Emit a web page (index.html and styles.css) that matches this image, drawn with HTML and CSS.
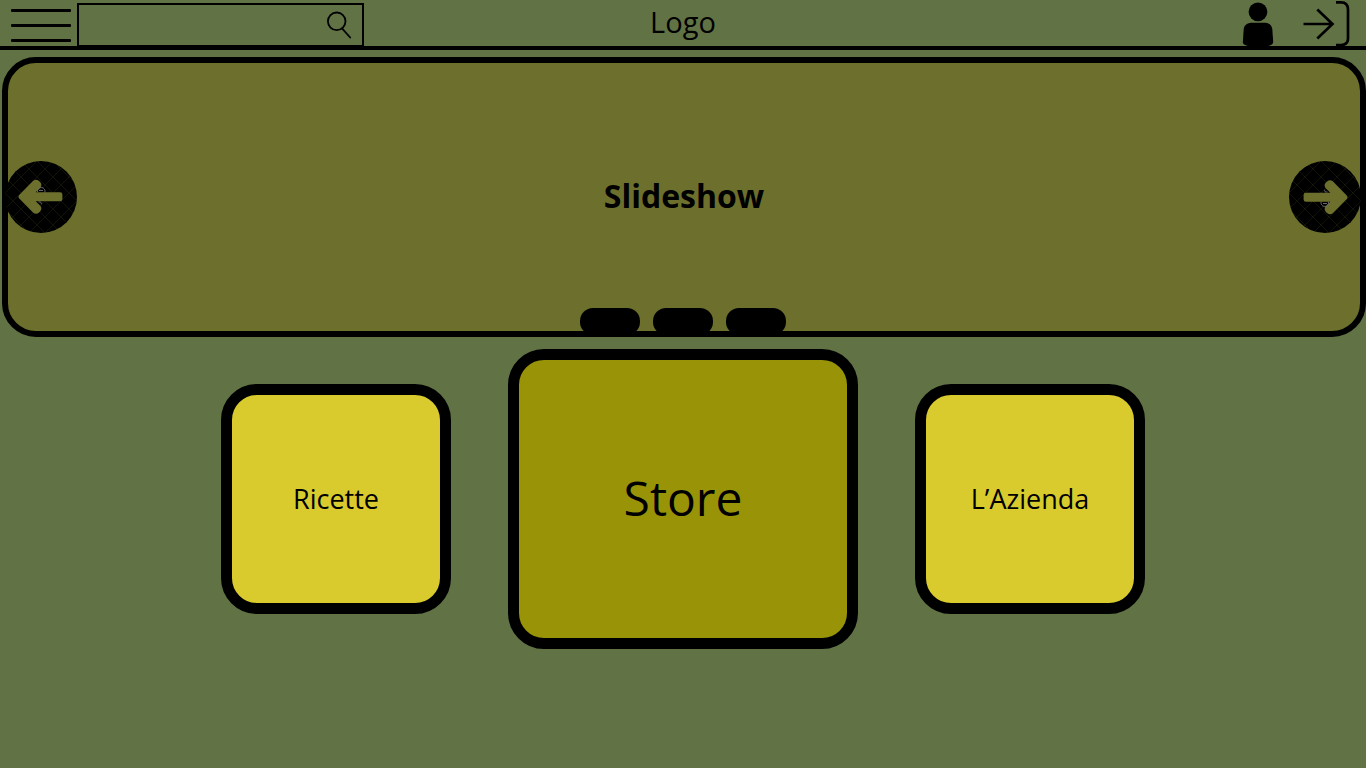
FILE: index.html
```html
<!DOCTYPE html>
<html lang="it">
<head>
  <meta charset="utf-8">
  <meta name="viewport" content="width=device-width, initial-scale=1">
  <title>Logo</title>
  <link rel="stylesheet" href="styles.css">
</head>
<body>
  <header class="topbar">
    <div class="topbar-left">
      <button class="icon-button menu-button" type="button" aria-label="Menu">
        <span class="menu-line"></span>
        <span class="menu-line"></span>
        <span class="menu-line"></span>
      </button>
      <form class="search" role="search">
        <input class="search-input" type="search" aria-label="Cerca">
        <button class="icon-button" type="submit" aria-label="Avvia ricerca">
          <svg class="icon" width="26" height="30" viewBox="0 0 26 30" fill="none" stroke="#000" stroke-width="1.8" stroke-linecap="round">
            <circle cx="10.700" cy="11.300" r="8.800"/>
            <path d="M16 18.300 24.200 27.500"/>
          </svg>
        </button>
      </form>
    </div>
    <a class="logo" href="#">Logo</a>
    <div class="topbar-right">
      <button class="icon-button" type="button" aria-label="Profilo">
        <svg class="icon" width="32" height="46" viewBox="0 0 32 46">
          <circle cx="16" cy="11.800" r="9.400"/>
          <path d="M8.500 22.800H23.500Q29.500 23.500 30.300 29L31.200 42Q31.200 44 29 45L25 46.500H7L2.500 44.800Q.8 43.800.9 42L1.700 29Q2.500 23.500 8.500 22.800Z"/>
        </svg>
      </button>
      <button class="icon-button" type="button" aria-label="Accedi">
        <svg class="icon" width="48" height="46" viewBox="0 0 48 46" fill="none" stroke="#000" stroke-width="2.700">
          <path d="M1.500 24H31M15.300 9.500 30.500 24 15.300 38.500"/>
          <path d="M34 2.300H39Q46 2.300 46 9.500V38.500Q46 45 39 45H34"/>
        </svg>
      </button>
    </div>
  </header>

  <main>
    <section class="slideshow" aria-label="Slideshow">
      <h1 class="slide-title">Slideshow</h1>
      <button class="icon-button arrow arrow-prev" type="button" aria-label="Precedente">
        <svg class="icon" width="72" height="72" viewBox="0 0 72 72">
          <defs>
            <pattern id="hatch" width="16" height="16" patternUnits="userSpaceOnUse">
              <path d="M0 0 16 16M16 0 0 16" stroke="#191a0c" stroke-width=".7"/>
            </pattern>
          </defs>
          <circle cx="36" cy="36" r="36"/>
          <circle cx="36" cy="36" r="36" fill="url(#hatch)"/>
          <path fill="#6d702c" d="M14 34.200 28 20Q31 17.500 34 20L35.300 21.300Q37.500 24 35.300 26.700L30.700 31.300H55Q57.400 31.300 57.400 33.600V38Q57.400 40.300 55 40.300H30.700L35.300 44.800Q37.500 47.500 35.300 50.200L34 51.500Q31 54 28 51.500L14 37.200Q12.800 35.700 14 34.200Z"/>
          <g fill="none" stroke="#707176" stroke-width=".9">
            <path d="M32.500 31A3.800 3.800 0 1 1 39.800 31.500M34 29.500H38"/>
            <path d="M33.500 41Q37 40.500 36.300 43.300"/>
          </g>
        </svg>
      </button>
      <button class="icon-button arrow arrow-next" type="button" aria-label="Successiva">
        <svg class="icon icon-turned" width="72" height="72" viewBox="0 0 72 72">
          <circle cx="36" cy="36" r="36"/>
          <circle cx="36" cy="36" r="36" fill="url(#hatch)"/>
          <path fill="#6d702c" d="M14 34.200 28 20Q31 17.500 34 20L35.300 21.300Q37.500 24 35.300 26.700L30.700 31.300H55Q57.400 31.300 57.400 33.600V38Q57.400 40.300 55 40.300H30.700L35.300 44.800Q37.500 47.500 35.300 50.200L34 51.500Q31 54 28 51.500L14 37.200Q12.800 35.700 14 34.200Z"/>
          <g fill="none" stroke="#707176" stroke-width=".9">
            <path d="M32.500 31A3.800 3.800 0 1 1 39.800 31.500M34 29.500H38"/>
            <path d="M33.500 41Q37 40.500 36.300 43.300"/>
          </g>
        </svg>
      </button>
      <div class="dots">
        <button class="dot" type="button" aria-label="Slide 1"></button>
        <button class="dot" type="button" aria-label="Slide 2"></button>
        <button class="dot" type="button" aria-label="Slide 3"></button>
      </div>
    </section>

    <nav class="cards" aria-label="Sezioni">
      <a class="card" href="#">Ricette</a>
      <a class="card card-main" href="#">Store</a>
      <a class="card" href="#">L’Azienda</a>
    </nav>
  </main>
</body>
</html>
```
FILE: styles.css
```css
* {
  box-sizing: border-box;
}

body {
  margin: 0;
  min-height: 100vh;
  background: #617345;
  color: #000;
  font-family: "Open Sans", "Noto Sans", sans-serif;
}

.icon-button {
  display: block;
  padding: 0;
  border: 0;
  background: none;
  cursor: pointer;
}

.icon {
  display: block;
}

.topbar {
  display: grid;
  grid-template-columns: 1fr auto 1fr;
  align-items: start;
  min-height: 50px;
  border-bottom: 4px solid #000;
}

.topbar-left {
  display: flex;
  gap: 6px;
  min-width: 0;
  padding: 3px 0 0 11px;
}

.menu-button {
  display: flex;
  flex-direction: column;
  gap: 12px;
  padding-top: 6px;
}

.menu-line {
  width: 60px;
  height: 3px;
  border-radius: 1px;
  background: #000;
}

.search {
  display: flex;
  align-items: center;
  flex: 0 1 287px;
  min-width: 0;
  height: 43px;
  padding-right: 10px;
  border: 2px solid #000;
  border-bottom-width: 1px;
}

.search-input {
  flex: 1;
  min-width: 0;
  height: 100%;
  padding: 0 8px;
  border: 0;
  outline: 0;
  background: none;
  font: inherit;
  font-size: 20px;
}

.logo {
  color: inherit;
  font-size: 29px;
  line-height: 44px;
  text-decoration: none;
}

.topbar-right {
  display: flex;
  justify-content: flex-end;
  gap: 28px;
  padding-right: 16px;
}

.slideshow {
  position: relative;
  display: flex;
  align-items: center;
  justify-content: center;
  min-height: 280px;
  margin: 7px 0 0 2px;
  border: 6px solid #000;
  border-radius: 34px;
  background: #6d702c;
}

.slide-title {
  margin: 0;
  padding-bottom: 2px;
  font-size: 32px;
  line-height: 44px;
}

.arrow {
  position: absolute;
  top: 50%;
  transform: translateY(-50%);
}

.arrow-prev {
  left: -3px;
}

.arrow-next {
  right: -1px;
}

.icon-turned {
  transform: rotate(180deg);
}

.dots {
  position: absolute;
  bottom: -4px;
  left: 0;
  right: 2px;
  display: flex;
  justify-content: center;
  gap: 13px;
}

.dot {
  width: 60px;
  height: 27px;
  padding: 0;
  border: 0;
  border-radius: 13px;
  background: #000;
  cursor: pointer;
}

.cards {
  display: flex;
  align-items: center;
  justify-content: center;
  gap: 57px;
  padding: 12px 16px;
}

.card {
  display: flex;
  align-items: center;
  justify-content: center;
  width: 230px;
  min-height: 230px;
  border: 11px solid #000;
  border-radius: 36px;
  background: #d9cb2d;
  color: inherit;
  font-size: 27px;
  line-height: 36px;
  text-decoration: none;
}

.card-main {
  width: 350px;
  min-height: 300px;
  padding-bottom: 2px;
  background: #999307;
  font-size: 48px;
  line-height: 64px;
}
```
